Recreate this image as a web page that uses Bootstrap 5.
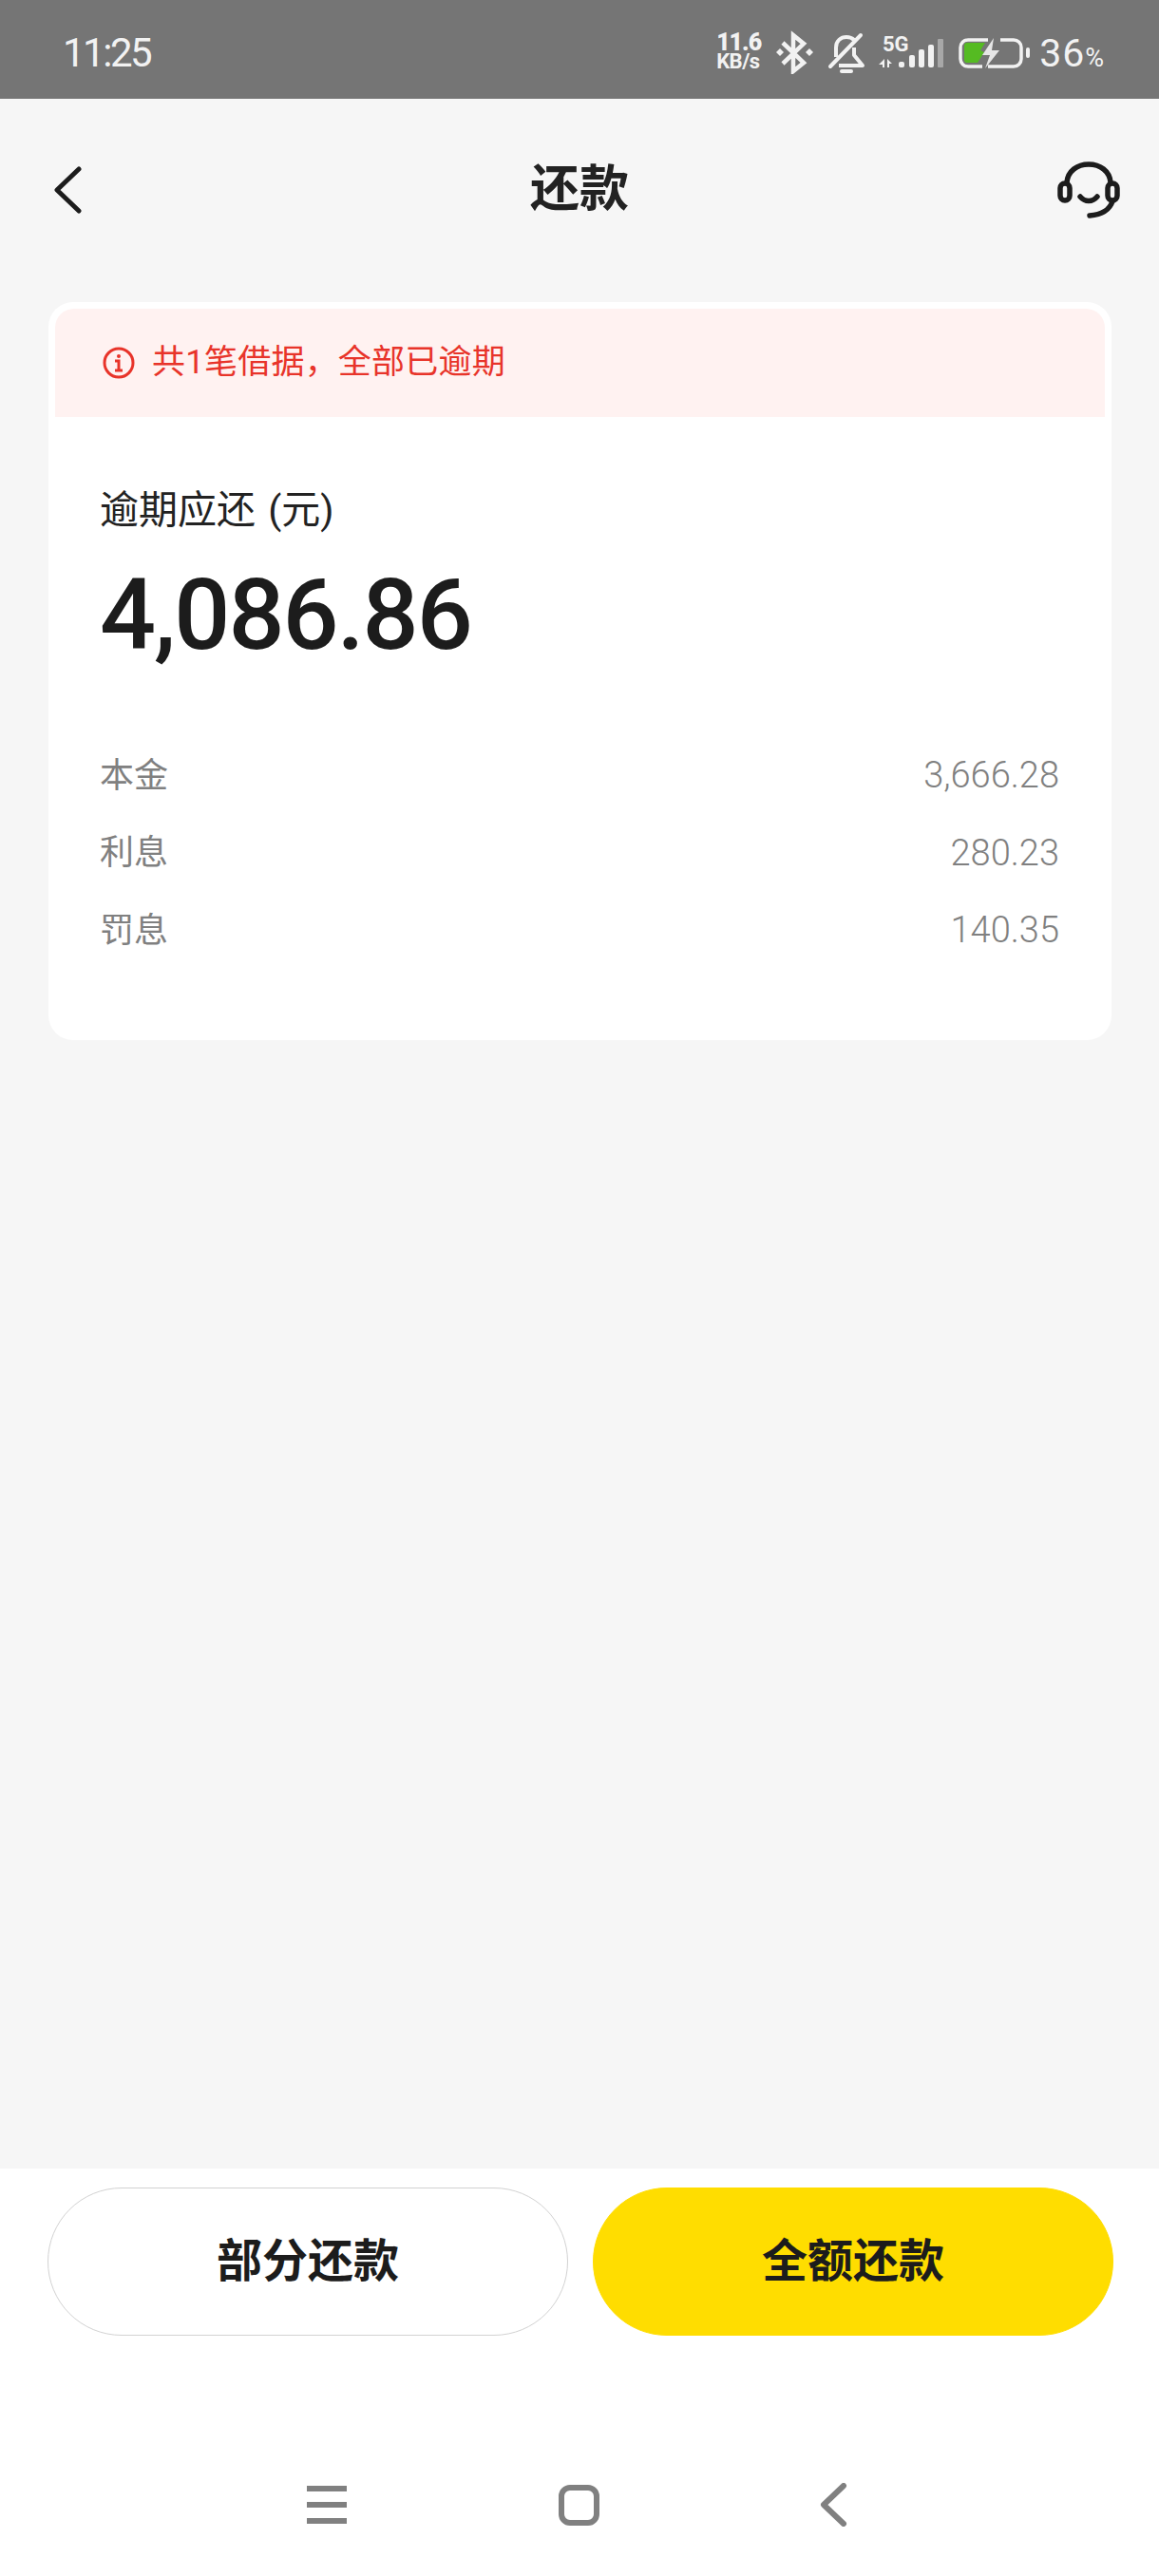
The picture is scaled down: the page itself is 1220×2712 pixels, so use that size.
<!DOCTYPE html>
<html lang="zh-CN">
<head>
    <meta charset="UTF-8">
    <meta name="viewport" content="width=device-width, initial-scale=1.0">
    <title>还款</title>
    <link href="https://cdn.jsdelivr.net/npm/bootstrap@5.3.0/dist/css/bootstrap.min.css" rel="stylesheet">
    <style>
        html, body { height: 100%; }
        body { background: #f6f6f6; font-family: Roboto, "Noto Sans CJK SC", sans-serif; color: #1c1c1c; }
        .app { height: 2712px; }
        .status-bar { height: 104px; background: #757575; color: #f2f2f2; padding: 0 58px 0 66px; }
        .status-time { font-size: 42px; letter-spacing: -2.500px; line-height: 1; margin-top: 8px; }
        .net-speed { font-weight: 700; width: 52px; line-height: 20px; font-size: 22px; letter-spacing: -.5px; white-space: nowrap; margin-top: 6px; }
        .net-speed b { display: block; font-size: 25px; letter-spacing: -1px; }
        .sb-bt { margin-left: 10px; }
        .sb-bell { margin-left: 15px; }
        .sb-signal { margin-left: 13px; }
        .sb-batt { margin-left: 15px; }
        .batt-pct { font-size: 41px; letter-spacing: 1px; line-height: 1; margin: 8px 0 0 9px; white-space: nowrap; }
        .batt-pct span { font-size: 27px; letter-spacing: 0; }
        .top-bar { height: 192px; padding: 0 42px 0 56px; }
        .page-title { font-size: 52px; font-weight: 700; line-height: 1; color: #222; }
        .top-left { width: 51px; }
        .top-right { width: 65px; }
        .loan-card { margin: 22px 50px 0 51px; background: #fff; border-radius: 26px; padding-top: 7px; height: 777px; }
        .overdue-note { margin: 0 7px; height: 114px; background: #fff2f1; border-radius: 20px 20px 0 0; color: #e8342a; font-size: 35px; letter-spacing: .2px; padding-left: 50px; gap: 18px; }
        .card-main { padding: 78px 55px 0 54px; }
        .due-label { font-size: 41px; line-height: 1; color: #222; word-spacing: 3px; }
        .due-amount { font-size: 104px; font-weight: 500; line-height: 1; margin-top: 38px; letter-spacing: -2px; }
        .fee-list { margin-top: 76px; color: #808080; font-size: 38px; font-weight: 300; }
        .fee-row { height: 81.5px; }
        .fee-label { font-size: 36px; font-weight: 400; }
        .bottom-bar { background: #fff; height: 429px; padding: 20px 48px 0 50px; }
        .btn-row { gap: 26px; }
        .pay-btn { width: 548px; height: 156px; border-radius: 78px; font-size: 48px; font-weight: 700; color: #1c1c1c; }
        .pay-btn.part { background: #fff; border: 1px solid #d2d2d2; }
        .pay-btn.full { background: #ffdd00; border: 1px solid #ffdd00; }
        .nav-keys { margin: 155px -48px 0 -50px; }
    </style>
</head>
<body>
<div class="app d-flex flex-column">
    <div class="status-bar d-flex align-items-center justify-content-between">
        <div class="status-time">11:25</div>
        <div class="d-flex align-items-center">
            <div class="net-speed"><b>11.6</b>KB/s</div>
            <svg class="sb-bt" width="40" height="52" viewBox="0 -8 40 52" fill="none" stroke="#f2f2f2" stroke-width="4.500"><path d="M8 11l22 21-11 9V3l11 9L8 33"/><path d="M5 17l4 4-4 4-4-4zM36 17l4 4-4 4-4-4z" fill="#f2f2f2" stroke="none"/></svg>
            <svg class="sb-bell" width="40" height="52" viewBox="0 -10 40 52" fill="none" stroke="#f2f2f2" stroke-width="4"><path d="M35 1L3 34" stroke-linecap="round"/><path d="M9 24V14C9 7 14 3 20 3c3 0 6 1 8 3"/><path d="M28 14v8l9 11H12" stroke-linejoin="round"/><path d="M15 39h10" stroke-linecap="round"/></svg>
            <svg class="sb-signal" width="70" height="44" viewBox="0 -6 70 44" fill="#f2f2f2"><text x="5" y="18" font-size="22" font-weight="700" font-family="Roboto">5G</text><path d="M7 26v9H5v-3H1zM10 26l5 5h-3v4h-2z"/><rect x="22" y="29" width="6" height="6" rx="2"/><rect x="33" y="22" width="6" height="13" rx="2"/><rect x="43" y="16" width="6" height="19" rx="2"/><rect x="53" y="11" width="6" height="24" rx="2"/><rect x="63" y="5" width="6" height="30" rx="1" fill="#a8a8a8"/></svg>
            <svg class="sb-batt" width="76" height="44" viewBox="0 -8 76 44" fill="none" stroke="#f2f2f2" stroke-width="3.500"><path d="M31 4H10a8 8 0 0 0-8 8v12a8 8 0 0 0 8 8h15"/><path d="M44 4h14a8 8 0 0 1 8 8v12a8 8 0 0 1-8 8H31"/><path d="M9 7h19l-5 8 4 2-7 11H9a3 3 0 0 1-3-3V10a3 3 0 0 1 3-3z" fill="#55bb22" stroke="none"/><path d="M37 2L25 20h8l-5 14 15-19h-8z" fill="#e6e6e6" stroke="none"/><rect x="71" y="12" width="4" height="11" rx="2" fill="#f2f2f2" stroke="none"/></svg>
            <div class="batt-pct">36<span>%</span></div>
        </div>
    </div>

    <div class="top-bar d-flex align-items-center justify-content-between">
        <div class="top-left">
            <svg width="30" height="50" viewBox="0 0 30 50" fill="none" stroke="#1c1c1c" stroke-width="5" stroke-linecap="round" stroke-linejoin="round"><path d="M27 3L4 25l23 22"/></svg>
        </div>
        <div class="page-title">还款</div>
        <div class="top-right text-end">
            <svg width="66" height="60" viewBox="0 0 66 60" fill="none" stroke="#1c1c1c" stroke-width="5.500" stroke-linecap="round"><path d="M10 22C11 10 21 3 33 3s22 7 23 19"/><rect x="3" y="23" width="10" height="18" rx="5"/><rect x="53" y="23" width="10" height="18" rx="5"/><path d="M24 37c5 6 13 6 18 0"/><path d="M58 42c-3 9-12 14-24 15"/></svg>
        </div>
    </div>

    <div class="loan-card">
        <div class="overdue-note d-flex align-items-center">
            <svg width="34" height="34" viewBox="0 0 34 34" fill="none" stroke="#e8342a" stroke-width="3"><circle cx="17" cy="17" r="15"/><circle cx="17" cy="10" r="2" fill="#e8342a" stroke="none"/><path d="M13 15h4v10M13 25h8"/></svg>
            <span>共1笔借据，全部已逾期</span>
        </div>
        <div class="card-main">
            <div class="due-label">逾期应还 (元)</div>
            <div class="due-amount">4,086.86</div>
            <div class="fee-list">
                <div class="fee-row d-flex justify-content-between align-items-center"><span class="fee-label">本金</span><span>3,666.28</span></div>
                <div class="fee-row d-flex justify-content-between align-items-center"><span class="fee-label">利息</span><span>280.23</span></div>
                <div class="fee-row d-flex justify-content-between align-items-center"><span class="fee-label">罚息</span><span>140.35</span></div>
            </div>
        </div>
    </div>

    <div class="bottom-bar mt-auto">
        <div class="btn-row d-flex">
            <button type="button" class="btn pay-btn part">部分还款</button>
            <button type="button" class="btn pay-btn full">全额还款</button>
        </div>
        <div class="nav-keys d-flex justify-content-center align-items-center">
            <svg width="760" height="46" viewBox="0 0 760 46" fill="none" stroke="#808080" stroke-width="6"><path d="M93 6h42M93 23h42M93 40h42"/><rect x="361" y="5" width="37" height="37" rx="9"/><path d="M658 3L637 23l21 20" stroke-linecap="round" stroke-linejoin="round"/></svg>
        </div>
    </div>
</div>
</body>
</html>
